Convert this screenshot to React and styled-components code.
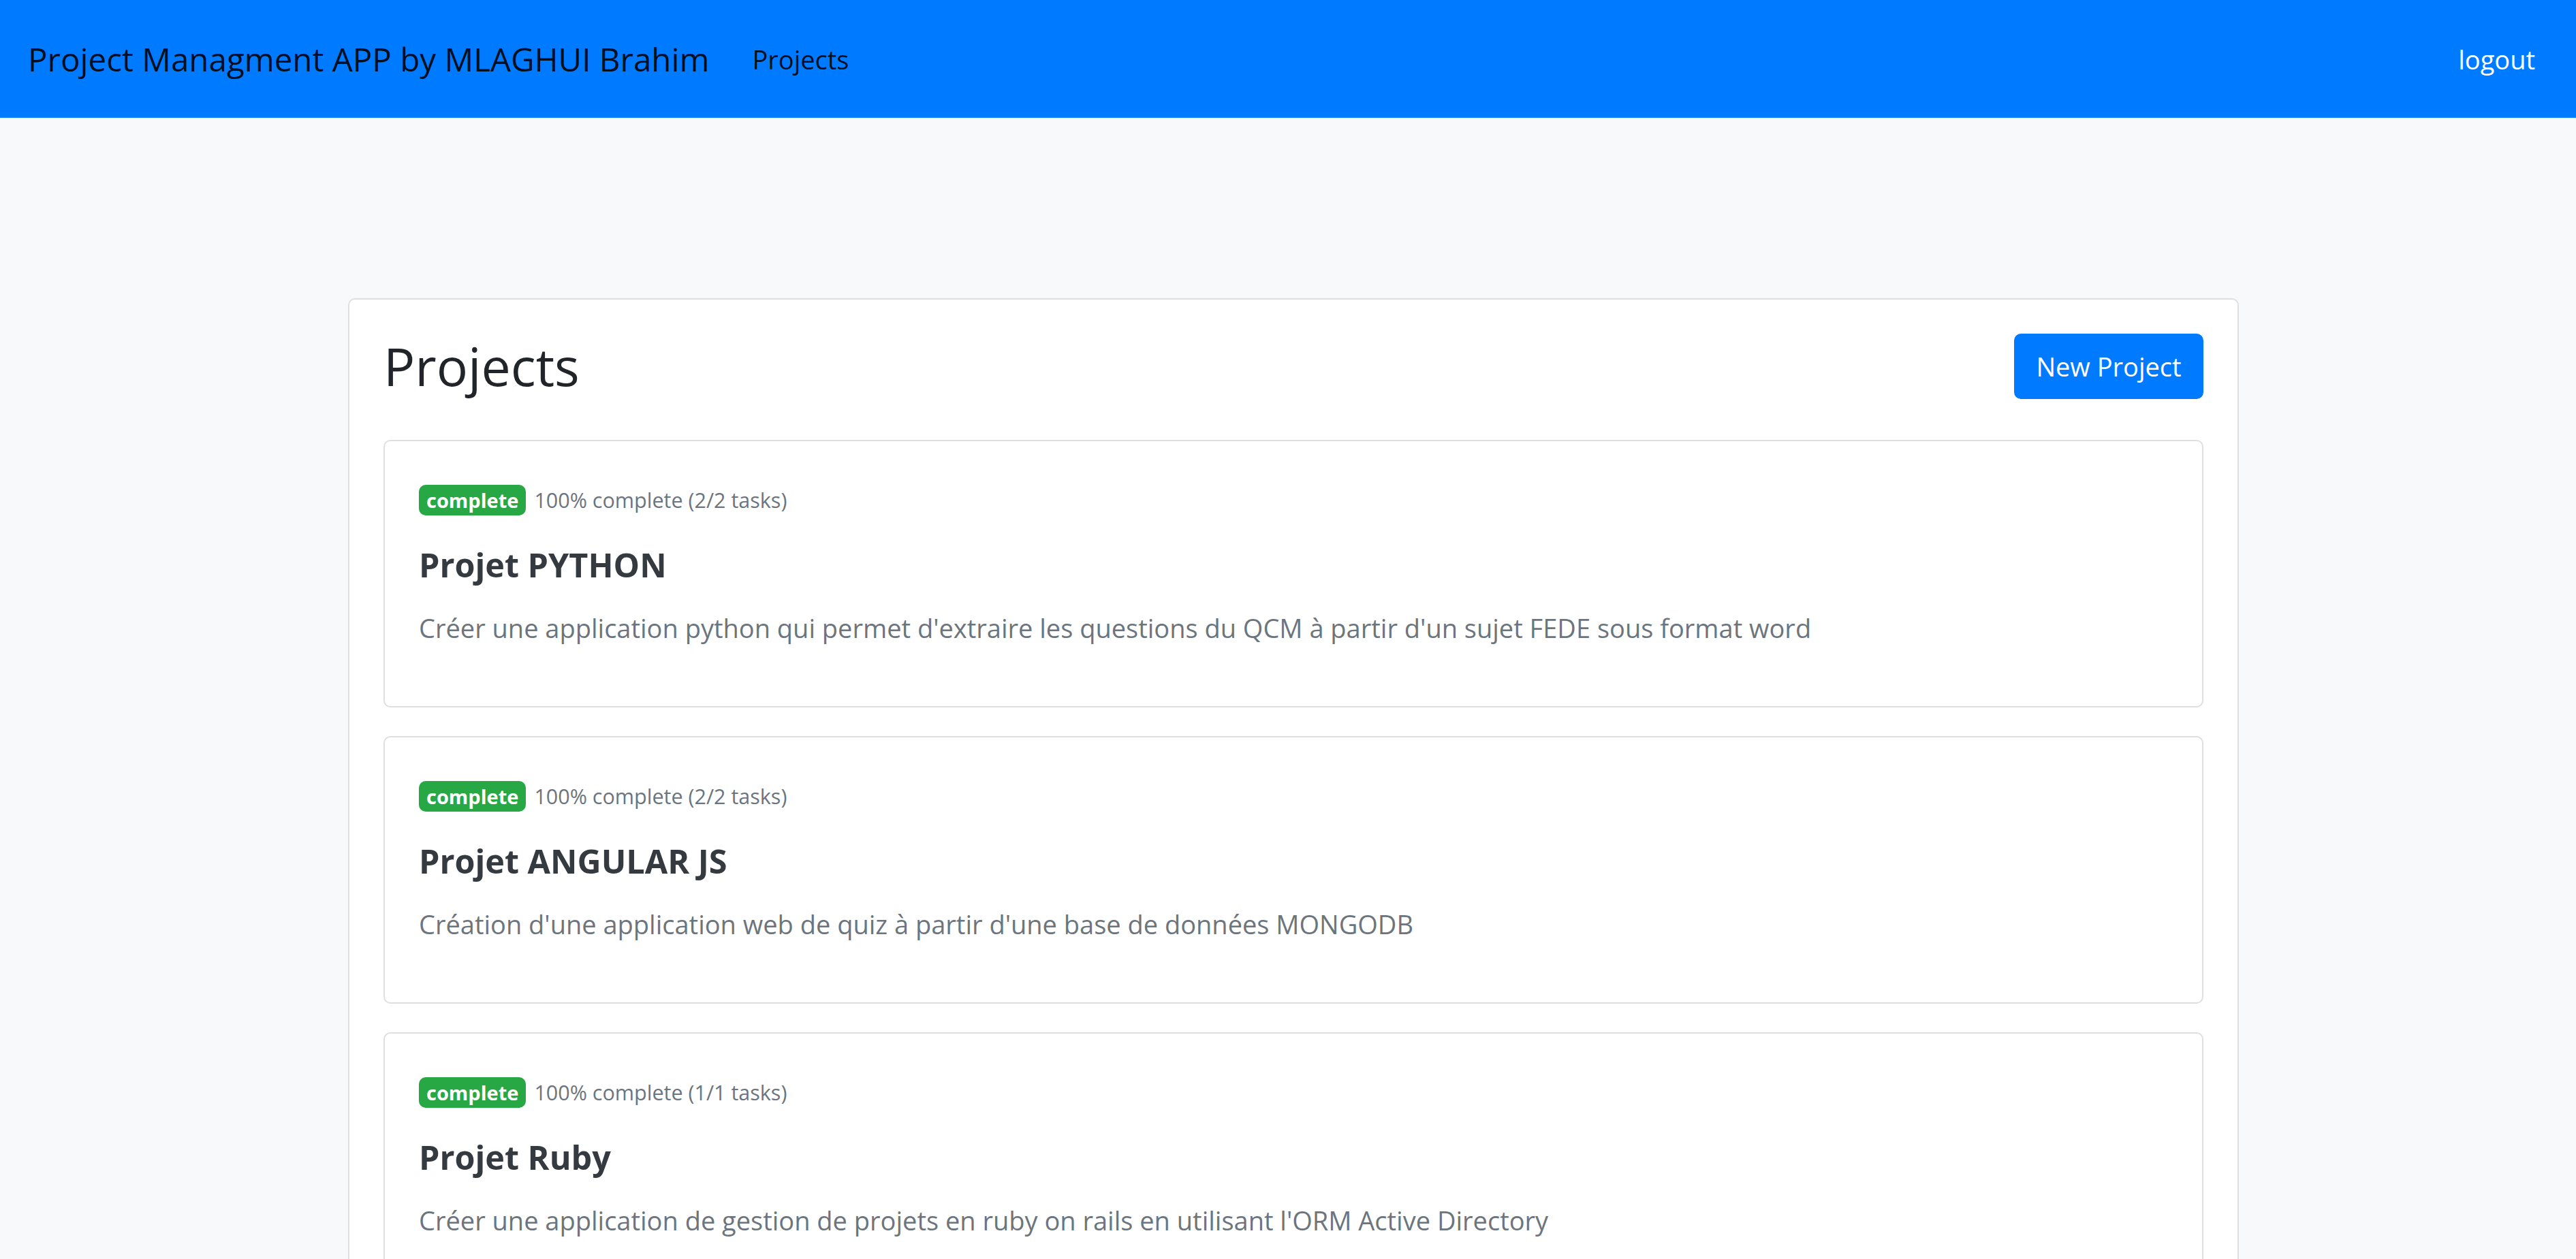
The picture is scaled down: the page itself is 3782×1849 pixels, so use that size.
import styled, { createGlobalStyle } from "styled-components";

const GlobalStyle = createGlobalStyle`
  body {
    margin: 0;
    background-color: #f8f9fa;
    font-family: "Open Sans", "Liberation Sans", sans-serif;
    font-size: 38px;
    line-height: 60px;
    color: #212529;
  }
  * {
    box-sizing: border-box;
  }
`;

const NavBar = styled.nav`
  align-items: center;
  background-color: #007bff;
  display: flex;
  height: 173px;
  padding: 0 40px 0 41px;
`;
const Brand = styled.a`
  color: rgba(0, 0, 0, 0.9);
  font-size: 47.5px;
  margin-right: 43px;
  text-decoration: none;
`;
const NavLink = styled.a`
  color: ${(props) => (props.light ? "#fff" : "rgba(0, 0, 0, 0.9)")};
  font-size: 38px;
  margin-left: ${(props) => (props.push ? "auto" : "0")};
  padding: 0 20px;
  text-decoration: none;
`;

const Main = styled.main`
  padding: 265px 0 0 16px;
`;
const Container = styled.div`
  margin: 0 auto;
  width: 2776px;
`;
const Panel = styled.div`
  background-color: #fff;
  border: 2px solid #dfdfdf;
  border-radius: 10px;
  padding: 50px;
`;
const PanelHeader = styled.div`
  align-items: center;
  display: flex;
  justify-content: space-between;
  margin-bottom: 60px;
`;
const Title = styled.h2`
  font-size: 77px;
  font-weight: 500;
  line-height: 96px;
  margin: 0;
`;
const NewButton = styled.button`
  background-color: #007bff;
  border: 2px solid #007bff;
  border-radius: 10px;
  color: #fff;
  font-family: inherit;
  font-size: 38px;
  height: 96px;
  line-height: 60px;
  padding: 0 30px;
  white-space: nowrap;
  width: 278px;
`;
const ProjectList = styled.div`
  display: flex;
  flex-direction: column;
  gap: 42px;
`;
const ProjectCard = styled.div`
  border: 2px solid #dfdfdf;
  border-radius: 10px;
  padding: 50px;
`;
const Meta = styled.p`
  align-items: center;
  display: flex;
  gap: 12px;
  height: 60px;
  margin: 6px 0 35px;
`;
const Badge = styled.span`
  background-color: #28a745;
  border-radius: 10px;
  color: #fff;
  font-size: 29px;
  font-weight: 700;
  line-height: 1;
  padding: 8px 11px;
`;
const Progress = styled.small`
  color: #6c757d;
  font-size: 30.5px;
`;
const ProjectName = styled.h5`
  color: #343a40;
  font-size: 48.5px;
  font-weight: 700;
  line-height: 60px;
  margin: 0 0 33px;
`;
const Description = styled.p`
  color: #6c757d;
  margin: 0 0 35px;
`;

const projects = [
  {
    name: "Projet PYTHON",
    done: 2,
    total: 2,
    description:
      "Créer une application python qui permet d'extraire les questions du QCM à partir d'un sujet FEDE sous format word",
  },
  {
    name: "Projet ANGULAR JS",
    done: 2,
    total: 2,
    description:
      "Création d'une application web de quiz à partir d'une base de données MONGODB",
  },
  {
    name: "Projet Ruby",
    done: 1,
    total: 1,
    description:
      "Créer une application de gestion de projets en ruby on rails en utilisant l'ORM Active Directory",
  },
];

function App() {
  return (
    <>
      <GlobalStyle />
      <NavBar>
        <Brand href="#">Project Managment APP by MLAGHUI Brahim</Brand>
        <NavLink href="#">Projects</NavLink>
        <NavLink href="#" push light>
          logout
        </NavLink>
      </NavBar>
      <Main>
        <Container>
          <Panel>
            <PanelHeader>
              <Title>Projects</Title>
              <NewButton>New Project</NewButton>
            </PanelHeader>
            <ProjectList>
              {projects.map((p) => (
                <ProjectCard key={p.name}>
                  <Meta>
                    <Badge>complete</Badge>
                    <Progress>
                      {Math.round((p.done / p.total) * 100)}% complete ({p.done}/
                      {p.total} tasks)
                    </Progress>
                  </Meta>
                  <ProjectName>{p.name}</ProjectName>
                  <Description>{p.description}</Description>
                </ProjectCard>
              ))}
            </ProjectList>
          </Panel>
        </Container>
      </Main>
    </>
  );
}

export default App;
